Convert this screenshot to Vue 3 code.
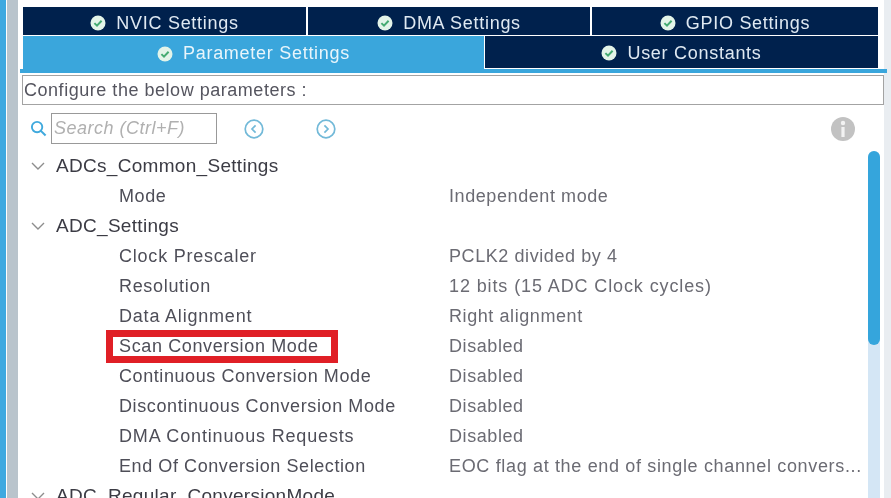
<script setup>
const topTabs = ['NVIC Settings', 'DMA Settings', 'GPIO Settings']
const rows = [
  { group: true, label: 'ADCs_Common_Settings' },
  { label: 'Mode', value: 'Independent mode' },
  { group: true, label: 'ADC_Settings' },
  { label: 'Clock Prescaler', value: 'PCLK2 divided by 4', labelSpacing: 0.78 },
  { label: 'Resolution', value: '12 bits (15 ADC Clock cycles)', labelSpacing: 0.68, valueSpacing: 0.89 },
  { label: 'Data Alignment', value: 'Right alignment', labelSpacing: 0.8 },
  { label: 'Scan Conversion Mode', value: 'Disabled', marked: true, labelSpacing: 0.63 },
  { label: 'Continuous Conversion Mode', value: 'Disabled' },
  { label: 'Discontinuous Conversion Mode', value: 'Disabled', labelSpacing: 0.61 },
  { label: 'DMA Continuous Requests', value: 'Disabled', labelSpacing: 0.84 },
  { label: 'End Of Conversion Selection', value: 'EOC flag at the end of single channel convers...', valueSpacing: 0.66 },
  { group: true, label: 'ADC_Regular_ConversionMode' },
]
const spacing = (v) => (v ? { letterSpacing: v + 'px' } : null)
</script>

<template>
  <div class="page">
    <div class="edge-blue"></div>
    <div class="edge-gray"></div>
    <main class="panel">
      <div class="tabs-top">
        <div v-for="t in topTabs" :key="t" class="tab dark">
          <svg class="check" viewBox="0 0 16 16"><circle cx="8" cy="8" r="7.5" fill="#e3f4e9"/><path d="M4.4 8.1 7 10.6l4.6-4.8" fill="none" stroke="#45ab72" stroke-width="2"/></svg>
          <span>{{ t }}</span>
        </div>
      </div>
      <div class="tabs-second">
        <div class="tab active">
          <svg class="check" viewBox="0 0 16 16"><circle cx="8" cy="8" r="7.5" fill="#e3f4e9"/><path d="M4.4 8.1 7 10.6l4.6-4.8" fill="none" stroke="#45ab72" stroke-width="2"/></svg>
          <span>Parameter Settings</span>
        </div>
        <div class="tab dark user">
          <svg class="check" viewBox="0 0 16 16"><circle cx="8" cy="8" r="7.5" fill="#e3f4e9"/><path d="M4.4 8.1 7 10.6l4.6-4.8" fill="none" stroke="#45ab72" stroke-width="2"/></svg>
          <span>User Constants</span>
        </div>
      </div>
      <div class="configure">Configure the below parameters :</div>
      <div class="body">
        <div class="content">
          <div class="toolbar">
            <svg class="search-icon" viewBox="0 0 18 18"><circle cx="7.5" cy="7.5" r="5.5" fill="none" stroke="#3fa9dd" stroke-width="2"/><path d="M11.5 11.5 16.5 16.5" stroke="#3fa9dd" stroke-width="2.2"/></svg>
            <div class="search">Search (Ctrl+F)</div>
            <svg class="nav first" viewBox="0 0 20 20"><circle cx="10" cy="10" r="8.8" fill="none" stroke="#72b9d8" stroke-width="1.7"/><path d="M11.6 6.4 8 10l3.6 3.6" fill="none" stroke="#72b9d8" stroke-width="1.7"/></svg>
            <svg class="nav second" viewBox="0 0 20 20"><circle cx="10" cy="10" r="8.8" fill="none" stroke="#72b9d8" stroke-width="1.7"/><path d="M8.4 6.4 12 10l-3.6 3.6" fill="none" stroke="#72b9d8" stroke-width="1.7"/></svg>
            <svg class="info" viewBox="0 0 24 24"><circle cx="12" cy="12" r="12" fill="#c2c2c2"/><circle cx="12" cy="6" r="2.2" fill="#f2f2f2"/><rect x="10.4" y="10" width="3.2" height="10" fill="#f2f2f2"/></svg>
          </div>
          <div class="tree">
            <div v-for="r in rows" :key="r.label" class="row">
              <template v-if="r.group">
                <svg class="chev" viewBox="0 0 14 8"><path d="M1 1l6 6 6-6" fill="none" stroke="#8d8d8d" stroke-width="1.4"/></svg>
                <span class="group-label">{{ r.label }}</span>
              </template>
              <template v-else>
                <span class="label" :class="{ marked: r.marked }" :style="spacing(r.labelSpacing)">{{ r.label }}</span>
                <span class="value" :style="spacing(r.valueSpacing)">{{ r.value }}</span>
              </template>
            </div>
          </div>
        </div>
        <div class="scroll">
          <div class="track"><div class="thumb"></div></div>
        </div>
      </div>
    </main>
    <div class="edge-right"></div>
  </div>
</template>

<style>
html, body { margin: 0; background: #fff; overflow: hidden; }
</style>

<style scoped>
.page {
  width: 891px;
  height: 498px;
  overflow: hidden;
  display: flex;
  background: #fff;
  font-family: "Liberation Sans", Arial, sans-serif;
  font-size: 18px;
  filter: blur(0.35px);
}
.edge-blue { width: 6px; background: #3fa9e0; flex: none; }
.edge-gray { width: 11px; margin-left: 1px; background: #b9c4cc; flex: none; }
.edge-right { width: 7px; background: #e9edf1; flex: none; }
.panel { flex: 1; min-width: 0; display: flex; flex-direction: column; padding-top: 7px; padding-left: 4px; }
.tabs-top { display: flex; height: 28px; margin-left: 1px; margin-right: 6px; gap: 2px; }
.tabs-top .tab { padding-top: 4px; box-sizing: border-box; }
.tabs-top .tab:nth-child(1) { flex: 0 0 283px; }
.tabs-top .tab:nth-child(2) { flex: 0 0 282px; }
.tabs-top .tab:nth-child(3) { flex: 1; }
.tabs-second { display: flex; height: 37px; margin-top: 1px; margin-left: 1px; margin-right: 6px; gap: 1px; position: relative; }
.tab { display: flex; align-items: center; justify-content: center; gap: 10px; color: #dfe9f2; letter-spacing: .72px; }
.tab.dark { background: #00214d; }
.tab.active { flex: 0 0 461px; background: #3aa6dc; padding-bottom: 2px; color: #e8f5fb; box-sizing: border-box; }
.tab.user { flex: 1; height: 32px; padding-top: 2px; box-sizing: border-box; }
.tabs-second::after { content: ""; position: absolute; left: -3px; right: -9px; bottom: 0; height: 4px; background: #3aa6dc; }
.check { width: 16px; height: 16px; flex: none; }
.configure {
  margin-top: 2px;
  height: 30px;
  line-height: 29px;
  border: 1px solid #a3a3a3;
  box-sizing: border-box;
  padding-left: 1px;
  color: #55555f;
  letter-spacing: .53px;
}
.body { flex: 1; min-height: 0; display: flex; }
.content { flex: 1; min-width: 0; }
.toolbar { display: flex; align-items: center; height: 46px; padding-top: 1px; box-sizing: border-box; }
.search-icon { width: 17px; height: 17px; margin-left: 8px; flex: none; }
.search {
  width: 166px;
  height: 31px;
  margin-left: 4px;
  border: 1px solid #999;
  box-sizing: border-box;
  padding-left: 2px;
  line-height: 28px;
  font-style: italic;
  color: #b0b0b0;
  letter-spacing: .5px;
  flex: none;
}
.nav { width: 20px; height: 20px; flex: none; }
.nav.first { margin-left: 27px; }
.nav.second { margin-left: 52px; }
.info { width: 24px; height: 24px; margin-left: auto; margin-right: 10px; flex: none; }
.row { height: 30px; display: flex; align-items: center; color: #4e4e58; letter-spacing: .58px; white-space: nowrap; }
.chev { width: 14px; height: 8px; margin-left: 9px; flex: none; }
.group-label { margin-left: 11px; color: #3b3b44; font-size: 19px; letter-spacing: .3px; }
.label { margin-left: 97px; width: 330px; flex: none; position: relative; }
.marked::before { content: ""; position: absolute; left: -13px; top: -6px; width: 218px; height: 19px; border: 7px solid #e01f26; }
.value { color: #6b6b73; }
.scroll { width: 12px; flex: none; margin-left: 3px; margin-right: 4px; padding-top: 46px; box-sizing: content-box; height: calc(100% - 46px); }
.track { height: 100%; background: #d4e6f5; border-radius: 6px 6px 0 0; }
.thumb { height: 194px; background: #35a5dc; border-radius: 6px; }
</style>
